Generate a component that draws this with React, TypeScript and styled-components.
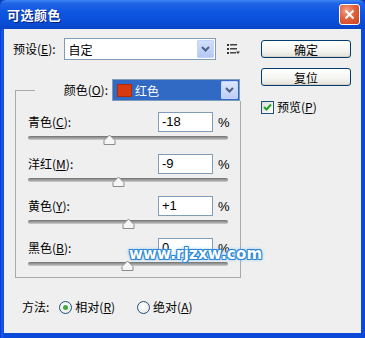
import React from "react";
import styled, { createGlobalStyle } from "styled-components";

const Global = createGlobalStyle`
  html, body { margin: 0; padding: 0; background: #0a3fb8; }
  body { font-family: "Noto Sans CJK SC", "Liberation Sans", sans-serif; font-size: 12px; color: #000; }
  * { box-sizing: border-box; }
`;

const Window = styled.div`
  position: relative;
  width: 365px;
  height: 338px;
  display: flex;
  flex-direction: column;
  background: linear-gradient(to right, #0831d9 0, #1a5ef0 2px, #0b49d8 4px);
  border-radius: 6px 6px 0 0;
  overflow: hidden;
`;

const TitleBar = styled.div`
  height: 29px;
  flex: none;
  display: flex;
  align-items: center;
  justify-content: space-between;
  padding: 0 5px 0 7px;
  background: linear-gradient(to bottom, #3d86f5 0%, #1f63e6 12%, #0d55e0 45%, #0a4fd8 75%, #0844c6 100%);
`;

const Title = styled.div`
  color: #fff;
  font-weight: bold;
  font-size: 13px;
  letter-spacing: 0.5px;
  text-shadow: 1px 1px 0 #0a1f7a;
`;

const CloseBtn = styled.div`
  width: 21px;
  height: 21px;
  border: 1px solid #fff;
  border-radius: 3px;
  background: radial-gradient(circle at 35% 30%, #f3a38a 0%, #e2603e 45%, #c8431f 100%);
  display: flex;
  align-items: center;
  justify-content: center;
`;

const Body = styled.div`
  flex: 1;
  margin: 0 4px 5px 4px;
  background: #efefef;
  display: flex;
  padding: 9px 0 0 9px;
`;

const LeftCol = styled.div`
  width: 238px;
  display: flex;
  flex-direction: column;
`;

const RightCol = styled.div`
  margin-left: 10px;
  padding-top: 2px;
  display: flex;
  flex-direction: column;
  gap: 10px;
`;

const PresetRow = styled.div`
  display: flex;
  align-items: center;
  height: 22px;
`;

const Label = styled.span`
  white-space: nowrap;
  line-height: 14px;
`;

const U = styled.span`
  text-decoration: underline;
`;

const SelectBox = styled.div<{ $w: number; $active?: boolean }>`
  width: ${(p) => p.$w}px;
  height: 22px;
  border: 1px solid #7f9db9;
  background: ${(p) => (p.$active ? "#316ac5" : "#fff")};
  color: ${(p) => (p.$active ? "#fff" : "#000")};
  display: flex;
  align-items: center;
  padding: 1px;
`;

const SelectText = styled.div`
  flex: 1;
  display: flex;
  align-items: center;
  gap: 3px;
  padding-left: 3px;
`;

const Swatch = styled.span`
  width: 15px;
  height: 13px;
  background: #d83a10;
  border: 1px solid #b02a08;
`;

const ArrowBtn = styled.div<{ $purple?: boolean }>`
  width: 17px;
  height: 18px;
  border-radius: 1px;
  background: ${(p) =>
    p.$purple
      ? "linear-gradient(to bottom, #dce5fb, #bdcdf6)"
      : "linear-gradient(to bottom, #d4e0fa, #b3c8f3)"};
  border: 1px solid #c3d3fd;
  display: flex;
  align-items: center;
  justify-content: center;
`;

const Chevron = () => (
  <svg width="9" height="6" viewBox="0 0 9 6">
    <path d="M1 1 L4.5 4.5 L8 1" fill="none" stroke="#4d6185" strokeWidth="2" />
  </svg>
);

const MenuIcon = styled.div`
  margin-left: 11px;
  width: 14px;
  height: 12px;
  display: flex;
  align-items: center;
`;

const GroupBox = styled.fieldset`
  margin: 19px 0 0 2px;
  width: 226px;
  height: 199px;
  border: 1px solid #a9a9a9;
  border-radius: 0;
  padding: 0 11px 0 12px;
  min-width: 0;
`;

const Legend = styled.legend`
  width: 209px;
  margin-left: 7px;
  padding: 0 4px 0 0;
  display: flex;
  align-items: center;
  justify-content: flex-end;
  gap: 4px;
  height: 22px;
`;

const GroupSpacer = styled.div`
  height: 11px;
`;

const SliderRow = styled.div`
  height: 42px;
  display: flex;
  flex-direction: column;
`;

const RowTop = styled.div`
  display: flex;
  align-items: center;
  height: 20px;
`;

const Spacer = styled.div`
  flex: 1;
`;

const NumInput = styled.div`
  width: 55px;
  height: 20px;
  border: 1px solid #7f9db9;
  background: #fff;
  font-family: "Liberation Sans", sans-serif;
  font-size: 13px;
  padding-left: 3px;
  line-height: 18px;
`;

const Pct = styled.span`
  width: 11px;
  margin-left: 5px;
  font-family: "Liberation Sans", sans-serif;
  font-size: 13px;
`;

const Track = styled.div`
  position: relative;
  margin: 4px 0 0 0;
  width: 200px;
  height: 4px;
  border-radius: 2px;
  background: linear-gradient(to bottom, #8a8a8a 0, #a8a8a8 50%, #cfcfcf 100%);
  border-top: 1px solid #7a7a7a;
`;

const Thumb = styled.div`
  position: absolute;
  top: -6px;
  width: 13px;
  height: 11px;
  margin-left: -6px;
`;

const ThumbSvg = () => (
  <svg width="13" height="11" viewBox="0 0 13 11">
    <path d="M1 10.5 L1 6.5 L6.5 1 L12 6.5 L12 10.5 Z" fill="#f6f6f6" stroke="#8c8c8c" strokeWidth="1" />
  </svg>
);

const MethodRow = styled.div`
  margin-top: 21px;
  padding-left: 9px;
  display: flex;
  align-items: center;
  height: 16px;
`;

const Radio = styled.span<{ $on?: boolean }>`
  width: 13px;
  height: 13px;
  border-radius: 50%;
  border: 1px solid #1c5180;
  background: radial-gradient(circle at 40% 40%, #ffffff 0%, #e4e4df 100%);
  display: inline-flex;
  align-items: center;
  justify-content: center;
  margin: 0 3px 0 0;
  &::after {
    content: "";
    width: 5px;
    height: 5px;
    border-radius: 50%;
    background: ${(p) => (p.$on ? "#42a93d" : "transparent")};
  }
`;

const RadioItem = styled.div<{ $gap: number }>`
  display: flex;
  align-items: center;
  margin-left: ${(p) => p.$gap}px;
`;

const Button = styled.div`
  width: 90px;
  height: 18px;
  border: 1px solid #003c74;
  border-radius: 3px;
  background: linear-gradient(to bottom, #ffffff 0%, #f4f4f0 60%, #e3e2da 100%);
  box-shadow: inset 0 -1px 0 #d6d0c5;
  display: flex;
  align-items: center;
  justify-content: center;
  font-size: 12px;
`;

const CheckRow = styled.div`
  display: flex;
  align-items: center;
  margin-top: 4px;
`;

const CheckBox = styled.span`
  width: 13px;
  height: 13px;
  border: 1px solid #1c5180;
  background: linear-gradient(135deg, #dcdcd7, #ffffff);
  display: inline-flex;
  align-items: center;
  justify-content: center;
  margin-right: 3px;
`;

const Watermark = styled.div`
  position: absolute;
  left: 129px;
  top: 245px;
  font-family: "DejaVu Sans", "Liberation Sans", sans-serif;
  font-weight: bold;
  font-size: 15px;
  color: #fff;
  letter-spacing: 0.2px;
  text-shadow: -1px -1px 0 #2a86d8, 1px -1px 0 #2a86d8, -1px 1px 0 #2a86d8, 1px 1px 0 #2a86d8,
    0 0 3px #5ab2f0, 0 0 4px #7cc3f5;
`;

const sliders = [
  { name: "青色", key: "C", value: "-18", pos: 81 },
  { name: "洋红", key: "M", value: "-9", pos: 90 },
  { name: "黄色", key: "Y", value: "+1", pos: 100 },
  { name: "黑色", key: "B", value: "0", pos: 99 },
];

export default function App() {
  return (
    <>
      <Global />
      <Window>
        <TitleBar>
          <Title>可选颜色</Title>
          <CloseBtn>
            <svg width="11" height="11" viewBox="0 0 11 11">
              <path d="M1.5 1.5 L9.5 9.5 M9.5 1.5 L1.5 9.5" stroke="#fff" strokeWidth="2" />
            </svg>
          </CloseBtn>
        </TitleBar>
        <Body>
          <LeftCol>
            <PresetRow>
              <Label>
                预设(<U>E</U>):
              </Label>
              <SelectBox $w={152} style={{ marginLeft: 8 }}>
                <SelectText>自定</SelectText>
                <ArrowBtn>
                  <Chevron />
                </ArrowBtn>
              </SelectBox>
              <MenuIcon>
                <svg width="14" height="11" viewBox="0 0 14 11">
                  <rect x="0" y="0" width="2" height="2" fill="#333" />
                  <rect x="0" y="4" width="2" height="2" fill="#333" />
                  <rect x="0" y="8" width="2" height="2" fill="#333" />
                  <rect x="3" y="0" width="7" height="1.5" fill="#444" />
                  <rect x="3" y="4" width="7" height="1.5" fill="#444" />
                  <rect x="3" y="8" width="6" height="1.5" fill="#444" />
                  <path d="M9 7.5 L13 7.5 L11 10 Z" fill="#333" />
                </svg>
              </MenuIcon>
            </PresetRow>
            <GroupBox>
              <Legend>
                <Label>
                  颜色(<U>O</U>):
                </Label>
                <SelectBox $w={128} $active>
                  <SelectText>
                    <Swatch />
                    红色
                  </SelectText>
                  <ArrowBtn $purple>
                    <Chevron />
                  </ArrowBtn>
                </SelectBox>
              </Legend>
              <GroupSpacer />
              {sliders.map((s) => (
                <SliderRow key={s.key}>
                  <RowTop>
                    <Label>
                      {s.name}(<U>{s.key}</U>):
                    </Label>
                    <Spacer />
                    <NumInput>{s.value}</NumInput>
                    <Pct>%</Pct>
                  </RowTop>
                  <Track>
                    <Thumb style={{ left: s.pos }}>
                      <ThumbSvg />
                    </Thumb>
                  </Track>
                </SliderRow>
              ))}
            </GroupBox>
            <MethodRow>
              <Label>方法:</Label>
              <RadioItem $gap={10}>
                <Radio $on />
                <Label>
                  相对(<U>R</U>)
                </Label>
              </RadioItem>
              <RadioItem $gap={22}>
                <Radio />
                <Label>
                  绝对(<U>A</U>)
                </Label>
              </RadioItem>
            </MethodRow>
          </LeftCol>
          <RightCol>
            <Button>确定</Button>
            <Button>复位</Button>
            <CheckRow>
              <CheckBox>
                <svg width="9" height="8" viewBox="0 0 9 8">
                  <path d="M1 4 L3.5 6.5 L8 1.5" fill="none" stroke="#21a121" strokeWidth="2" />
                </svg>
              </CheckBox>
              <Label>
                预览(<U>P</U>)
              </Label>
            </CheckRow>
          </RightCol>
        </Body>
        <Watermark>www.rjzxw.com</Watermark>
      </Window>
    </>
  );
}
